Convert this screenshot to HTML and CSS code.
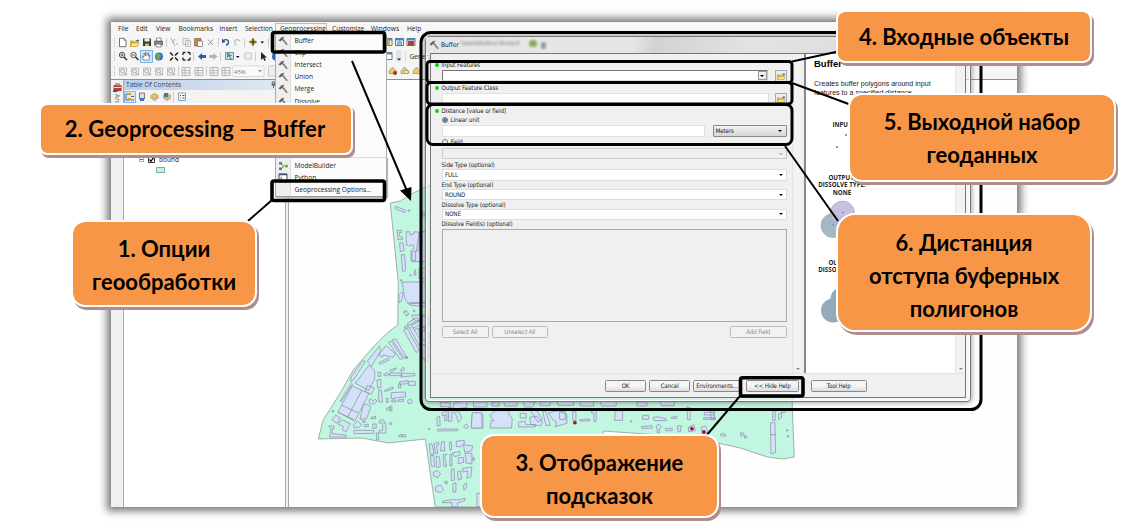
FILE: index.html
```html
<!DOCTYPE html>
<html lang="ru">
<head>
<meta charset="utf-8">
<title>Geoprocessing — Buffer</title>
<link rel="stylesheet" href="styles.css">
</head>
<body>
<svg class="defs" width="0" height="0">
  <defs>
    <g id="hammer"><path d="M.5 4.400L3.600 1.200L6.600.8L5 2.400L5.800 3.600L3.600 4.200L2.200 5.600Z" fill="#5d6163"/><path d="M4.600 3.400L9.200 8.800" stroke="#8b8278" stroke-width="1.700"/></g>
    <g id="folder"><path d="M1 8.5V3h3l1 1h4v4.500z" fill="#d9b23c"/><path d="M1 9l2-3.800h7L8.500 9z" fill="#ffe27a" stroke="#a07c1c" stroke-width=".5"/><path d="M6 2.600h2.500v-1l2 1.400-2 1.500" fill="#3a73b8"/></g>
    <g id="zoomer"><circle cx="4" cy="4" r="2.700" fill="#eef5fb" stroke="#444" stroke-width=".9"/><path d="M6 6l3 3" stroke="#333" stroke-width="1.500"/><path d="M2.600 4h2.800" stroke="#333" stroke-width=".8"/></g>
    <g id="page"><path d="M1.500.8h4.500l2 2v6.400h-6.500z" fill="#fff" stroke="#555" stroke-width=".8"/><path d="M6 .8v2h2" fill="none" stroke="#555" stroke-width=".6"/></g>
    <g id="ghost"><path d="M1.500 1.500h7v7h-7z" fill="#eee" stroke="#aaa" stroke-width=".7"/><circle cx="4.500" cy="4.500" r="2" fill="none" stroke="#999" stroke-width=".7"/><path d="M6 6l2.500 2.500" stroke="#999"/></g>
    <g id="grid"><path d="M1 1h8v8H1zM1 4h8M1 6.500h8M4 1v8" fill="none" stroke="#aaa" stroke-width=".8"/></g>
    <g id="window"><path d="M1 1h8v7H1z" fill="#fff" stroke="#456" stroke-width=".8"/><path d="M1 1h8v2H1z" fill="#4a86c8"/></g>
    <g id="layer"><path d="M5 1l4 3-4 3-4-3z" fill="#efc14e" stroke="#8d6f22" stroke-width=".5"/><path d="M1 5.500l4 3 4-3" fill="none" stroke="#8d8d8d"/></g>
    <g id="warn"><path d="M4.500 1l4 4v2.500h-7.500V5z" fill="#e8c96a" stroke="#8a7330" stroke-width=".5"/></g>
  </defs>
</svg>

<main class="stage">
  <section class="app">
    <nav class="menubar">
      <span class="m1">File</span><span class="m2">Edit</span><span class="m3">View</span><span class="m4">Bookmarks</span><span class="m5">Insert</span><span class="m6">Selection</span><span class="m7">Geoprocessing</span><span class="m8">Customize</span><span class="m9">Windows</span><span>Help</span>
    </nav>
    <svg class="toolbars" viewBox="111 35 906 45">
      <g class="grips"><path d="M114.500 38v9M114.500 52v9M114.500 67v9M405.500 52v9"/></g>
      <use href="#page" x="118" y="37.500"/><use href="#folder" x="129" y="37.500"/>
      <path d="M143 38.500h8v7.500h-8z" fill="#393733"/><path d="M144.500 38.500h5v3h-5z" fill="#fff6c8"/><path d="M145 43.500h4v2.500h-4z" fill="#c9bd57"/>
      <path d="M154.500 41h8v4h-8z" fill="#8b8b83" stroke="#444" stroke-width=".6"/><path d="M156.500 38h4.500v3h-4.500zM156 44h5v3h-5z" fill="#fff" stroke="#555" stroke-width=".6"/>
      <path d="M166.500 38v9M218.500 38v9M244.500 38v9M268.500 38v9" stroke="#ccc"/>
      <path d="M171 38l4 8M175 39l-3 4M176 43l2 2" stroke="#aaa" fill="none"/>
      <path d="M183 38.500h5v6h-5zM185.500 40.500h5v6h-5z" fill="#eee" stroke="#aaa" stroke-width=".7"/>
      <path d="M194.500 38.500h6.500v7.500h-6.500z" fill="#b88e53" stroke="#775522" stroke-width=".6"/><path d="M197.500 41h5v5.500h-5z" fill="#fff" stroke="#555" stroke-width=".6"/>
      <path d="M208 39.500l5 5.500M213 39.500l-5 5.500" stroke="#999"/>
      <path d="M223 41c3-2.500 6-1 5.500 1.500S226 45 226 45" stroke="#28549a" stroke-width="1.300" fill="none"/><path d="M222 38.500v4.500l3.500-1z" fill="#28549a"/>
      <path d="M240 41c-3-2.500-6-1-5.500 1.500S237 45 237 45" stroke="#bbb" stroke-width="1.200" fill="none"/>
      <path d="M253 38l4.500 4-4.500 4-4.500-4z" fill="#eac44e"/><path d="M253 38.500v7M249.500 42h7" stroke="#222" stroke-width="1.200"/><path d="M260.500 41.500h3.500l-1.700 2z"/>
      <use href="#zoomer" x="118" y="51"/><path d="M122 53.500v3" stroke="#333" stroke-width=".8"/><use href="#zoomer" x="129.500" y="51"/>
      <path d="M140.500 50.500h12v12h-12z" fill="#cfe6fb" stroke="#5aa2e0" stroke-width=".8"/><path d="M143.500 60l-1.500-4 2 1v-4l1.500 3v-4l1.500 3.500 1.500-3v4l1.500-1.500-1 5z" fill="#fff" stroke="#555" stroke-width=".6"/>
      <circle cx="159" cy="56.500" r="4" fill="#2d74c9"/><path d="M157 53.500l3 .5 1.500 2-2 1 .5 3-3-1-1-3z" fill="#6fae3f"/>
      <path d="M170 52.500l3 3M178 52.500l-3 3M170 60.500l3-3M178 60.500l-3-3" stroke="#222" stroke-width="1.500"/>
      <path d="M183 52.500h2.500M183 52.500v2.500M190 52.500h-2.500M190 52.500v2.500M183 60h2.500M183 60v-2.500M190 60h-2.500M190 60v-2.500" stroke="#222" stroke-width="1.300"/>
      <path d="M193.500 52v9M220.500 52v9M255.500 52v9" stroke="#ccc"/>
      <path d="M198 56.500l4-3.500v2h4v3h-4v2z" fill="#2a5db4"/><path d="M217.500 56.500l-4-3.500v2h-4v3h4v2z" fill="#a8b3c4"/>
      <path d="M225.500 52.500h8v7h-8z" fill="#cbe2ee" stroke="#567" stroke-width=".7"/><path d="M227 52v6l2-1.500 2 4 1-1-2-3.500h2.500z" fill="#55918d"/><path d="M236 56h3.500l-1.700 2z"/>
      <path d="M244.500 53h7v6h-7z" fill="#eee" stroke="#bbb" stroke-width=".8"/><path d="M261 52v8l2-2 1.500 3 1.300-.7L264.500 57.500h2.500z" fill="#222"/><circle cx="276" cy="56.500" r="4" fill="#2a66b4"/>
      <use href="#ghost" x="118" y="66.500"/><use href="#ghost" x="130" y="66.500"/><use href="#ghost" x="142" y="66.500"/><use href="#ghost" x="154" y="66.500"/><use href="#ghost" x="166" y="66.500"/>
      <use href="#grid" x="181" y="66.500"/><use href="#grid" x="194" y="66.500"/><use href="#grid" x="209" y="66.500"/><use href="#grid" x="221" y="66.500"/>
      <path d="M178.500 66v10M206.500 66v10" stroke="#ccc"/>
      <path d="M233 66h31v10.500h-31z" fill="#fafafa" stroke="#ccc" stroke-width=".7"/><path d="M258 70h4l-2 2.500z" fill="#999"/><path d="M268.500 66h10v10h-10z" fill="#eee" stroke="#ccc"/>
      <text x="234" y="73.500" class="zoom-value">45%</text>
      <use href="#window" x="383" y="37.500"/><use href="#window" x="394.500" y="37.500"/><use href="#window" x="406" y="37.500"/>
      <path d="M384 39.500h6v6h-6z" fill="#d8a928"/><circle cx="399.500" cy="43.500" r="2.200" fill="#8bc2dd" stroke="#467" stroke-width=".6"/><path d="M408 41h6v4.500h-6z" fill="#b93a35"/>
      <use href="#window" x="383" y="51.500"/><path d="M396 50h5.500v12H396z" fill="#e3e3e3"/><path d="M397 58.500h4l-2 2z" fill="#222"/>
      <text x="409.500" y="59" class="label-text">General</text>
      <use href="#warn" x="388" y="66"/><use href="#warn" x="400" y="66"/><use href="#warn" x="412" y="66"/>
      <circle cx="395" cy="73" r="2" fill="#b42b2b"/><path d="M404.500 70.500h3.500v3h-3.500z" fill="#fff2aa" stroke="#886" stroke-width=".6"/>
      <path d="M111 79.500h906" stroke="#8e8e8e"/>
    </svg>
    <div class="workspace">
      <aside class="sidetab">
        <svg viewBox="0 0 10 10"><path d="M.5 2.500h9v6.500h-9z" fill="#b93a30"/><path d="M3 2.500V1h4v1.500" fill="none" stroke="#555"/><path d="M1 5h8" stroke="#eee"/><path d="M0 8h5v2H0z" fill="#35557c"/></svg>
        <span>ArcToolbox</span>
      </aside>
      <section class="toc">
        <header><span>Table Of Contents</span><svg viewBox="0 0 6 8"><path d="M1.500 1h3v3h-3zM.5 4.500h5M3 4.500V8" fill="none" stroke="#345"/></svg></header>
        <svg class="toc-tools" viewBox="125 90 160 14">
          <path d="M125.500 91.500h11v11h-11z" fill="#d5e9fb" stroke="#66a7de" stroke-width=".8"/>
          <path d="M127 94h3M127 94v6h4M132 96.500h3M132 100h3" stroke="#555" fill="none" stroke-width=".9"/><path d="M129 93h3v2h-3zM129 98h3v2h-3z" fill="#dc9c32"/>
          <path d="M140.500 93h5v6l-2.500 2-2.500-2z" fill="#d9dde2" stroke="#555" stroke-width=".7"/><path d="M141 98h4v3h-4z" fill="#3d75b5"/>
          <use href="#layer" x="150.500" y="92"/><use href="#layer" x="163" y="92"/><path d="M165 93h4v4h-4z" fill="#2c84a8"/>
          <path d="M174.500 92v10" stroke="#ccc"/><path d="M179.500 93h7v7.500h-7z" fill="#fff" stroke="#789" stroke-width=".8"/><path d="M181 95.500h1M183.500 95.500h2M181 98h1M183.500 98h2" stroke="#345"/>
        </svg>
        <div class="layer-row"><i class="minus"></i><svg class="check" viewBox="0 0 7 7"><path d="M.5.5h6v6h-6z" fill="#fff" stroke="#333"/><path d="M1.500 3.500l1.500 1.700 3-4" fill="none" stroke="#000" stroke-width="1.200"/></svg><span>bound</span></div>
        <div class="swatch"></div>
      </section>
      <div class="splitter"></div>
      <svg class="map" viewBox="289 80 728 427">
        <path class="land" d="M390 203L400 201L413 193L432 184L793 184L792 407L794 457L782 459L767 457L740 448L717 443L660 435L603 431V436L560 507H435L425 439L388 443L362 438L318 439L323 420L340 393L353 370L372 348L388 332L397.500 325L398 283L394 243Z"/>
        <g class="bldg" transform="translate(290 180) scale(.33333)">
          <path d="M316 79l30 12-2 7-30-12zM353 90l6 1v3l-6-1zM321 151h14v6h-8l2 14h8v8h-14zM328 190l10-2 4 24-12 3zM333 224h10l3 48-9 2zM348 155h10l2 10 10-2v-7h16v55l-10 4v27h-14v-30l8-5v-10l-8-3-4 5-10-4zM388 155h20v90h-42v-30l12-2zM386 265h22v30h-22zM335 306h73v62l-55 4-10-20zM326 344l8-8 5 3-5 24-8 5zM357 368h50v12l-47-4zM340 396l7-4 8 11-6 5zM369 391h5v4h-5zM359 284h3v4h-3zM331 299h3v4h-3zM371 274l5-5 1 17-5-1zM364 421l4-3 5 6-4 3zM342 440l10-4 3 8h-12zM356 430l40-18 3 7-36 17zM370 443l32-14 4 12-36 8zM396 95l6 3v12l-5-3z"/>
        </g>
        <g class="bldg" transform="translate(290 310) scale(.33333)">
          <path d="M342 8l6-6 8 9-7 6zM352 40l28-18 4 9-30 16zM340 60l10-6 36 64-8 10zM358 54l8-5 27 44-6 14zM364 15h42v10l-30 9zM384 60l18-8 4 20-14 8zM390 105h16v50l-12-18z"/>
          <path d="M268 108l3 13-26 48-14-15zM270 129l17-22 28 24-6 11-30-7-2 6-10-4zM295 97l8-4 35 53-9 2zM306 90l10-4 34 57-8 1zM267 157l28-13 4 5-30 14zM345 140h7v5h-7z"/>
          <path d="M218 151l7 4-36 56-8 4 2-15zM236 166l18 17-1 25-18 33-40-21zM183 220l4 3-34 52-3-2zM186 228l50 22-42 84-51-28zM232 226l21 8-10 19-19-9zM219 286l8-4 15 8-13 36-20 2z"/>
          <path d="M236 270l6-5 6 9 7-7 5 6-8 9h-14zM260 210l12-2v24l-10 2zM265 240h8l4 36-12-1zM263 187h9v12h-8zM280 193l12-5 3 6-12 4zM298 189h36v8h-36zM330 180l10-9 2 9-9 5zM336 190h38v7l-43 4zM299 180l20-6-16 13zM283 241l25-10v6l-24 8zM303 248l42-2 2 14-44 6zM305 270h12v6h-13zM323 270l17-3v7h-17zM352 272l6-5 8 4-3 9-9 1zM288 295l11-3v8h-10zM299 288h6v15h-5zM325 222h6v12h-6zM327 216l26-4v9l-24 2zM355 214h20v12h-20zM288 265h6v12h-6z"/>
          <path d="M143 307l48 22M155 286l48 22M215 240l-43 82M125 330l12-15 13 9-9 16zM144 343l11-14 25 12-12 24-12-5 3-11zM115 348h16v8h-5v15l42 4v6h-50l4-25zM191 361h60v9l-60 1zM190 345l12-12 12 12-9 8h-14zM217 332h8v5h-8zM222 345l12-3v8h-12zM242 322l14-3v7h-14zM247 342h11v13h-10zM258 369h7v20h-6zM269 330h12l2 10 4-1v30h-20v-8h10v-22h-10zM298 338h6v5h-6zM325 377l10-4v7h-10zM337 374h9v7h-10zM126 302h4v4h-4z"/>
          <path d="M440 322l8-4 2 28-9 2zM443 357h60l-1 5-60 1zM415 355h3v4h-3zM456 308l14-5v30l-8-2 3-17-8 4zM475 293l10-2v42l-10 2zM490 308l11-3 1-15h14l-9 18 8 16-11 14-5-20zM520 350l8-8 7 6-5 8zM546 312l12-4 20 6v40h-34z"/>
          <path d="M417 403l8-2 7 31-12 2zM431 401l14-5 1 8-7 2 4 24-8-2zM454 395h9v28h-12zM478 396h6v24h-6zM498 394l24-3v10l-10 9h-14zM520 404l28 4-5 15-20 4zM486 429l22-5 2 11-16 5zM504 443h16v14l-16 4zM525 430h20v32l-17-3zM421 437l9-2 3 35-10-2zM438 438l10 3 2 30-12 1zM459 434l11-2-6 8 5 30-9-2zM479 433h6v35h-6zM548 443h4v8h-4zM429 487l12-5 10 9-8 12-13-5zM483 478l8-3 2 35-10 2zM502 485l9-3 3 25-10 3zM517 475l28-4-3 30-12 4 3-22-15 3zM436 530l16-5 8 15-10 8-14-6zM464 513l7 1v7h-7zM488 521l9-3v28h-9zM520 525l8-6 1 14-8 8zM457 574l24-5h30l13-5v8l-22 7v11h-18v-12h-27zM560 550h12v40h-12z"/>
        </g>
        <g class="bldg" transform="translate(420 310) scale(.33333)">
          <path d="M5 20h20v28H5zM5 60l22 10v30l-22-12zM3 105h20v50l-17-12z"/>
          <path d="M60 278h30v12H60zM100 280l40-8v20l-40 6zM160 275h40v16h-40zM215 278l22-2v12h-22zM250 275h40v13h-36zM310 272l35 5-8 14h-25zM360 275h30v12h-30zM410 272h50v14h-46zM480 275h40v13h-40zM540 274h48v14h-45zM650 276h30v12h-30zM720 272h42v15h-40z"/>
          <path d="M208 316l18-14h40v10l10 14-2 28h-65l4-22h8zM156 308h28l2 46h-33zM294 337l20-4 3 11h28v7h-50zM300 310h18v14h-18zM329 300l16-4 22 32-14 8zM328 322l22-3 17 17-5 12-30-5zM367 304h10l14 42h-14zM385 308l30-6 25 12v26l-35 10 3-14-10-6zM418 305h18v23h-18zM457 305h10v28h-9zM478 329l30-2v6h-30zM514 302h14v32h-7v-24h-7zM585 302h22v29h-24zM631 332h3v4h-3zM663 350l32-3v8h-30zM707 348l9-5 8 7-7 8v11h-6v-11zM736 355h20v7h-20zM667 316h18v12h-18zM698 323l10-3 30 6v6h-36zM752 323l18-5v7h-16zM800 290l10 3v36h-8zM771 348l12-1-3 19-6-1zM804 352l17-8 4 18-20 3zM842 352l14-4 8 20-18 2zM852 307h30v8h-30zM850 323h36v5h-36zM870 302h12v26h-9zM900 372l14-1 2 7h-13zM961 368l10 2-4 9-6-2zM973 376l6 2v6h-6zM1058 300l7 3v28h-8zM1051 338h13l2 90-14 4zM1050 374h16M1074 313l10-5v14l-8 7zM1085 300h10v8h-10zM1099 359h4v4h-4zM1101 377h4v4h-4z"/>
          <circle class="mark" cx="464" cy="338" r="5"/><circle class="mark" cx="815" cy="356" r="5"/><circle class="mark" cx="851" cy="366" r="5"/>
        </g>
      </svg>
    </div>
  </section>

  <section class="dropdown">
    <div class="tab"></div>
    <ul>
      <li><svg viewBox="0 0 10 10"><use href="#hammer"/></svg>Buffer</li>
      <li><svg viewBox="0 0 10 10"><use href="#hammer"/></svg>Clip</li>
      <li><svg viewBox="0 0 10 10"><use href="#hammer"/></svg>Intersect</li>
      <li><svg viewBox="0 0 10 10"><use href="#hammer"/></svg>Union</li>
      <li><svg viewBox="0 0 10 10"><use href="#hammer"/></svg>Merge</li>
      <li><svg viewBox="0 0 10 10"><use href="#hammer"/></svg>Dissolve</li>
    </ul>
    <ul class="lower">
      <li><svg viewBox="0 0 10 10"><path d="M1 1h3v2.500H1zM1 6.500h3V9H1z" fill="#3b83c9"/><path d="M3 3l3 2-3 3M6 5h1" fill="none" stroke="#345" stroke-width=".7"/><circle cx="5.500" cy="5" r="1.500" fill="#e0be3c"/><circle cx="8.500" cy="5" r="1.500" fill="#58a63d"/></svg>ModelBuilder</li>
      <li><svg viewBox="0 0 10 10"><path d="M1 1h8v8H1z" fill="#fff" stroke="#356"/><path d="M1 1.500h8" stroke="#356" stroke-width="1.500"/><path d="M2.500 4l1.500 1-1.500 1" fill="none" stroke="#222" stroke-width=".7"/></svg>Python</li>
      <li class="options"><svg viewBox="0 0 10 10"></svg>Geoprocessing Options...</li>
    </ul>
  </section>

  <section class="dialog">
    <header class="titlebar">
      <svg viewBox="0 0 10 10"><use href="#hammer"/></svg><span>Buffer</span>
      <span class="ghost-title">Geostatistical Analyst</span><i class="ghost-dot"></i><i class="ghost-dot gray"></i>
    </header>
    <div class="client">
      <div class="panes">
        <form class="params">
          <label class="req l-in">Input Features</label>
          <div class="row r-in"><span class="field sunk"><span class="combo-button"><b></b></span></span><span class="browse"><svg viewBox="0 0 11 11"><use href="#folder"/></svg></span></div>
          <label class="req l-out">Output Feature Class</label>
          <div class="row r-out"><span class="field"></span><span class="browse"><svg viewBox="0 0 11 11"><use href="#folder"/></svg></span></div>
          <label class="req l-dist">Distance [value or field]</label>
          <div class="radio"><i class="on"></i>Linear unit</div>
          <div class="row r-dist"><span class="field"></span><span class="units">Meters<b></b></span></div>
          <div class="radio second"><i></i>Field</div>
          <div class="select off"><b></b></div>
          <label>Side Type (optional)</label>
          <div class="select">FULL<b></b></div>
          <label>End Type (optional)</label>
          <div class="select">ROUND<b></b></div>
          <label>Dissolve Type (optional)</label>
          <div class="select">NONE<b></b></div>
          <label>Dissolve Field(s) (optional)</label>
          <div class="list"></div>
          <div class="list-actions"><span class="btn b1">Select All</span><span class="btn b2">Unselect All</span><span class="btn b3">Add Field</span></div>
        </form>
        <div class="scroll left"><b></b></div>
        <article class="help">
          <h1>Buffer</h1>
          <p>Creates buffer polygons around input<br>features to a specified distance.</p>
          <svg viewBox="806 115 150 225">
            <g class="cap"><text x="842" y="126.500">INPUT</text><text x="842" y="179.500">OUTPUT:</text><text x="842" y="187">DISSOLVE TYPE:</text><text x="842" y="194.500">NONE</text><text x="842" y="264.500">OUTPUT:</text><text x="842" y="271.500">DISSOLVE TYPE:</text></g>
            <path d="M845 134h2v2h-2zM836 146h2v2h-2z" fill="#7d98c8"/>
            <circle cx="833" cy="225.500" r="12" fill="#a5b8c6" stroke="#93a9ba" stroke-width=".7"/>
            <circle cx="842.500" cy="213" r="12" fill="#c2bbdb" fill-opacity=".92" stroke="#aaa3c6" stroke-width=".7"/>
            <path d="M832 225h2M842 212.500h2" stroke="#6b7fb0"/>
            <g fill="#94abbc"><circle cx="842.500" cy="299" r="12"/><circle cx="833" cy="310.500" r="12"/><circle cx="857" cy="321" r="12"/></g>
          </svg>
        </article>
        <div class="scroll"><b></b></div>
      </div>
      <footer class="buttons"><span class="btn">OK</span><span class="btn">Cancel</span><span class="btn env">Environments...</span><span class="btn hide">&lt;&lt; Hide Help</span><span class="btn tool">Tool Help</span></footer>
    </div>
  </section>

  <svg class="marks" viewBox="0 0 1141 527">
    <g class="frames">
      <rect x="421" y="32.500" width="560" height="377" rx="10"/>
      <rect x="272.500" y="32.500" width="112" height="19.500" rx="2" stroke-width="3.600"/>
      <rect x="272" y="181" width="112.500" height="19.500" rx="2" stroke-width="3.600"/>
      <rect x="427" y="61.500" width="365" height="21" rx="3"/>
      <rect x="427" y="82.500" width="365" height="21.500" rx="4"/>
      <rect x="427" y="104.500" width="365" height="40" rx="6"/>
      <rect x="740.500" y="377.700" width="62.500" height="18.300" rx="2" stroke-width="3.600"/>
    </g>
    <path class="leaders" d="M352 61L407 191M272 200L248 221M740 396L706 436M792 61.500L838 51.500M792 83L850 104.500M785 146L838 221"/>
    <path d="M411 201L400 190.500L411.500 187Z"/>
  </svg>

  <div class="callout c1"><span>1. Опции</span><span>геообработки</span></div>
  <div class="callout c2"><span>2. Geoprocessing — Buffer</span></div>
  <div class="callout c3"><span>3. Отображение</span><span>подсказок</span></div>
  <div class="callout c4"><span>4. Входные объекты</span></div>
  <div class="callout c5"><span>5. Выходной набор</span><span>геоданных</span></div>
  <div class="callout c6"><span>6. Дистанция</span><span>отступа буферных</span><span>полигонов</span></div>
</main>
</body>
</html>
```
FILE: styles.css
```css
* { box-sizing: border-box; }
body { margin: 0; background: #fff; }
.defs { position: absolute; }
.stage { position: relative; width: 1141px; height: 527px; overflow: hidden; font: 6.6px/8px "Open Sans", "Noto Sans", sans-serif; color: #222; }

.app { position: absolute; left: 111px; top: 22px; width: 906px; height: 485px; background: #fefefe; display: flex; flex-direction: column; box-shadow: 0 0 8px 4px #777; }
.menubar { height: 13px; padding: 2.500px 0 0 7px; display: flex; background: #f6f6f6; white-space: nowrap; }
.menubar span { flex: none; }
.m1 { width: 18px; } .m2 { width: 20px; } .m3 { width: 22.500px; } .m4 { width: 41px; } .m5 { width: 25.500px; }
.m6 { width: 35px; } .m7 { width: 52px; } .m8 { width: 39px; } .m9 { width: 36px; }
.toolbars { display: block; width: 906px; height: 45px; background: #f5f5f5; flex: none; }
.grips path { stroke: #aaa; stroke-dasharray: 1 1.500; }
.zoom-value { font-size: 6px; fill: #777; }
.label-text { font-size: 6.600px; fill: #222; }
.workspace { flex: 1; display: flex; min-height: 0; }
.sidetab { width: 13px; background: #f0f0f0; border-right: 1px solid #aaa; padding: 3px 1px; display: flex; flex-direction: column; align-items: center; gap: 2px; }
.sidetab svg { width: 9px; height: 9px; }
.sidetab span { writing-mode: vertical-rl; color: #777; }
.toc { width: 160.500px; background: #fff; display: flex; flex-direction: column; }
.toc header { height: 9.500px; padding: 0 9px 0 2px; display: flex; justify-content: space-between; align-items: center; background: linear-gradient(90deg, #bcd0e4, #dfe9f3); color: #2c4a70; }
.toc header svg { width: 5px; height: 7px; }
.toc-tools { width: 160px; height: 14px; background: #f3f3f3; }
.layer-row { margin: 52px 0 0 14.500px; display: flex; align-items: center; }
.minus { width: 5px; height: 5px; border: 1px solid #aab; background: linear-gradient(#667, #667) center / 3px 1px no-repeat; }
.check { width: 7px; height: 7px; margin: 0 4px 0 4.500px; }
.swatch { margin: 3px 0 0 32px; width: 9px; height: 6.500px; background: #bdf5de; border: 1px solid #8aa; }
.splitter { width: 4px; border: solid #a5a5aa; border-width: 0 1px; background: #f0f0f0; }
.map { flex: 1; height: 427px; width: 728px; background: #fefefe; }
.land { fill: #c1f7e1; stroke: #909c98; stroke-width: .8; }
.bldg path { fill: #d5e1f9; stroke: #8288a2; stroke-width: 2; }
.mark { fill: #b3122f; stroke: #500; }

.dropdown { position: absolute; left: 275px; top: 23px; width: 112px; height: 173.500px; display: flex; flex-direction: column; color: #222; }
.dropdown .tab { width: 52px; height: 12px; border: 1px solid #bbb; border-bottom: 0; }
.dropdown ul { list-style: none; margin: 0; padding: 0; border: 1px solid #aaa; border-width: 0 1px; background: linear-gradient(90deg, #eee 14px, #ddd 14px, #ddd 15px, #fbfbfb 15px); }
.dropdown ul:first-of-type { height: 122px; }
.dropdown li { height: 12.120px; display: flex; align-items: center; gap: 6.500px; padding-left: 2px; white-space: nowrap; }
.dropdown li svg { width: 10px; height: 10px; }
.dropdown .lower { flex: 1; padding-top: 1.500px; border-top: 1px solid #ddd; border-bottom: 1px solid #999; box-shadow: 1px 1px 1px #bbb; }
.dropdown .lower li { height: 12px; }

.dialog { position: absolute; left: 425px; top: 36px; width: 546px; height: 366px; border: 1px solid #777; border-radius: 4px; padding: 0 4px 3.500px 3.500px; display: flex; flex-direction: column; background: rgba(236,238,240,.6); box-shadow: inset 0 0 0 1px #fff, 0 0 5px 1px rgba(60,60,60,.45); font: 6.200px/8px "DejaVu Sans Condensed", "Liberation Sans", sans-serif; }
.titlebar { height: 16px; margin: 0 -4px 0 -3.500px; padding: 0 3px; display: flex; align-items: center; background: linear-gradient(100deg, #e6e6e6 0 38%, #d2d2d2 42%, #e3e3e3 60%, #d8d8d8); font-size: 6.600px; }
.titlebar svg { width: 10px; height: 10px; margin-right: 2px; }
.ghost-title { width: 66px; margin-left: 2px; filter: blur(1px); color: #777; font-size: 6px; margin-top: -4px; white-space: nowrap; }
.ghost-dot { width: 8px; height: 7px; margin: -4px 0 0 2px; border-radius: 4px; background: #8cab55; filter: blur(1px); }
.ghost-dot.gray { width: 5px; margin-left: 4px; margin-top: 0; background: #999; }
.client { flex: 1; border: 1px solid #777; background: #f0f0f0; display: flex; flex-direction: column; min-height: 0; }
.panes { height: 319px; display: flex; }
.params { width: 363px; margin: 0; padding: 6.500px 5.500px 0 11px; display: flex; flex-direction: column; letter-spacing: -.1px; }
.params label { flex: none; height: 8px; white-space: nowrap; }
.params .req { margin-left: -7px; display: flex; align-items: center; }
.req::before { content: ""; width: 4px; height: 4px; margin-right: 3px; border-radius: 50%; background: #0d0; }
.row { display: flex; flex: none; justify-content: space-between; }
.field { background: #fff; border: 1px solid #e0e0e0; }
.r-in { height: 13px; margin-top: 1.500px; }
.r-in .field { width: 326px; height: 11px; }
.field.sunk { border-color: #777 #ccc #ddd #777; display: flex; justify-content: flex-end; }
.combo-button { width: 9px; background: #eee; border: 1px solid #999; display: flex; align-items: center; justify-content: center; }
.browse { width: 12px; height: 13px; border: 1px solid #aaa; background: #eee; }
.browse svg { width: 10px; height: 11px; display: block; }
.l-out { margin-top: 1px; }
.r-out { height: 13px; margin-top: 1px; }
.r-out .field { width: 327px; height: 11px; }
.l-dist { margin-top: 1px; }
.radio { display: flex; align-items: center; height: 8px; flex: none; margin-top: .7px; }
.radio i { width: 6px; height: 6px; border: 1px solid #777; border-radius: 50%; margin-right: 3px; background: #eee; }
.radio i.on { background: #236fa6; box-shadow: inset 0 0 0 .5px #dde; }
.r-dist { height: 11.500px; margin-top: 1.800px; }
.r-dist .field { width: 263px; }
.units { width: 74px; border: 1px solid #888; border-radius: 1px; background: linear-gradient(#f3f3f3, #d6d6d6); display: flex; align-items: center; justify-content: space-between; padding: 0 4px 0 2px; }
.units b, .select b, .scroll b, .combo-button b { border: solid transparent; border-width: 2.500px 2.200px 0; border-top-color: #000; }
.radio.second { margin-top: 1.500px; }
.select { flex: none; height: 11.500px; background: #fff; border: 1px solid #ddd; display: flex; align-items: center; justify-content: space-between; padding: 0 2.500px; margin-bottom: .2px; }
.select.off { margin: 1.500px 0 1.700px; background: #efefef; border-color: #ccc; justify-content: flex-end; }
.select.off b { border-top-color: #aaa; }
.list { flex: none; height: 93px; border: 1px solid #aaa; margin-top: .3px; }
.list-actions { display: flex; margin-top: 4px; }
.btn { height: 12px; width: 41px; border: 1px solid #888; border-radius: 1.500px; background: linear-gradient(#f5f5f5 50%, #dcdcdc); display: flex; align-items: center; justify-content: center; white-space: nowrap; overflow: hidden; flex: none; letter-spacing: -.15px; }
.list-actions .btn { color: #888; border-color: #bbb; background: #f2f2f2; }
.list-actions .b1 { width: 47px; }
.list-actions .b2 { width: 56.500px; margin-left: 3px; }
.list-actions .b3 { width: 56.500px; margin-left: auto; }
.scroll { width: 10px; background: #f2f2f2; border-left: 1px solid #e5e5e5; display: flex; align-items: flex-end; justify-content: center; padding-bottom: 3px; flex: none; }
.scroll.left { margin-right: 2px; }
.scroll b { border-top-color: #888; }
.help { width: 151px; flex: none; background: #fff; border-left: 2px solid #888; display: flex; flex-direction: column; font-family: "Liberation Sans", sans-serif; color: #222; }
.help h1 { margin: 4px 0 0 8px; font-size: 9.500px; line-height: 11px; color: #000; }
.help p { margin: 11px 0 0 8px; font-size: 7.100px; line-height: 8.500px; white-space: nowrap; }
.help svg { width: 150px; height: 225px; margin-top: 18px; flex: none; }
.cap text { font: bold 6.200px "Open Sans", sans-serif; text-anchor: middle; fill: #222; }
.buttons { flex: 1; display: flex; gap: 3.200px; padding: 6px 0 0 174.500px; border-top: 1px solid #e3e3e3; }
.buttons .env { width: 47px; }
.buttons .hide { width: 53.500px; margin-left: 2px; }
.buttons .tool { width: 56px; margin-left: 8.500px; }

.marks { position: absolute; inset: 0; width: 1141px; height: 527px; }
.frames { fill: none; stroke: #000; stroke-width: 3; }
.leaders { fill: none; stroke: #000; stroke-width: 2; }

.callout { position: absolute; display: flex; flex-direction: column; align-items: center; justify-content: center; padding-top: 2px; background: #f79646; background-clip: padding-box; border: 2px solid #fff; border-radius: 14px; box-shadow: 2px 3px 0 #b08c8c; font: bold 22px/33px Lato, "Open Sans", sans-serif; font-variant-ligatures: none; color: #000; white-space: nowrap; }
.c1 { left: 71px; top: 220px; width: 186px; height: 87px; }
.c2 { left: 39px; top: 103px; width: 314px; height: 52px; padding: 0 2px 1px 0; border-radius: 8px; letter-spacing: .1px; }
.c3 { left: 480px; top: 434px; width: 239px; height: 84px; padding-top: 5px; }
.c4 { left: 836px; top: 10px; width: 256px; height: 53px; padding-top: 0; border-radius: 9px; }
.c5 { left: 848px; top: 93px; width: 268px; height: 89px; padding-top: 0; }
.c6 { left: 836px; top: 213px; width: 256px; height: 119px; padding-top: 6px; border-radius: 19px; }
```
